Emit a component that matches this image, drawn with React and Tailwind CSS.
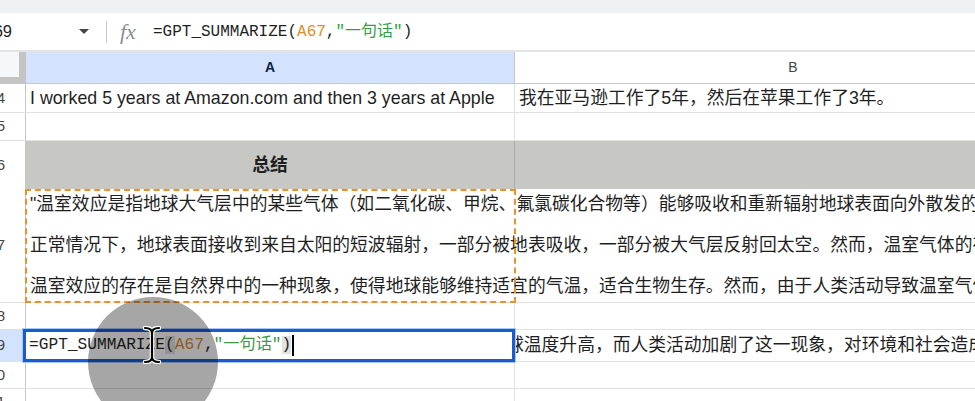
import React from "react";

const sans = "font-['Liberation_Sans','Noto_Sans_CJK_SC',sans-serif]";
const mono = "font-['Liberation_Mono','Noto_Sans_CJK_SC',monospace]";

const line1 =
  '"温室效应是指地球大气层中的某些气体（如二氧化碳、甲烷、氟氯碳化合物等）能够吸收和重新辐射地球表面向外散发的热量';
const line2 =
  "正常情况下，地球表面接收到来自太阳的短波辐射，一部分被地表吸收，一部分被大气层反射回太空。然而，温室气体的存在";
const line3 =
  "温室效应的存在是自然界中的一种现象，使得地球能够维持适宜的气温，适合生物生存。然而，由于人类活动导致温室气体";

const Formula = ({ paren = false }) => (
  <>
    <span>=GPT_SUMMARIZE</span>
    <span className={paren ? "bg-[#e2e2e2]" : ""}>(</span>
    <span className="text-[#de8f2c]">A67</span>
    <span>,</span>
    <span className="text-[#379b45]">"一句话"</span>
    <span className={paren ? "bg-[#e2e2e2]" : ""}>)</span>
  </>
);

const RowNum = ({ n, active }) => (
  <div
    className={`w-[26px] shrink-0 border-r border-[#c4c7c5] overflow-hidden flex items-center justify-end pr-[20px] text-[15px] text-[#444] ${
      active ? "bg-[#d3e3fd]" : "bg-white"
    }`}
  >
    <span className="shrink-0">{n}</span>
  </div>
);

export default function App() {
  return (
    <div className={`w-[975px] h-[401px] overflow-hidden bg-white relative text-[#1f1f1f] ${sans}`}>
      {/* top strip */}
      <div className="h-[13px] bg-[#eef1f4]" />

      {/* formula bar */}
      <div className="h-[39px] flex items-center border-b-2 border-[#e1e3e6]">
        <div className="w-[106px] shrink-0 flex items-center">
          <div className="w-[12px] overflow-hidden flex justify-end">
            <span className="shrink-0 text-[16.5px]">69</span>
          </div>
          <div className="ml-[67px] w-0 h-0 border-l-[5px] border-r-[5px] border-t-[5px] border-l-transparent border-r-transparent border-t-[#444]" />
        </div>
        <div className="w-px h-[22px] bg-[#c7c7c7]" />
        <span className="ml-[13px] w-[20px] font-['Liberation_Serif',serif] italic text-[22px] text-[#8a8d91] leading-none">
          fx
        </span>
        <span className={`ml-[13px] text-[16px] whitespace-nowrap ${mono}`}>
          <Formula />
        </span>
      </div>

      {/* column headers */}
      <div className="h-[32px] flex border-b border-[#c4c7c5]">
        <div className="w-[26px] shrink-0 bg-[#c4c4c4]">
          <div className="w-[19px] h-[25px] bg-[#f6f7f8]" />
        </div>
        <div className="w-[489px] shrink-0 bg-[#d3e3fd] border-r border-[#c4c7c5] flex items-center justify-center text-[14px] font-bold text-[#0b1d45]">
          A
        </div>
        <div className="w-[556px] shrink-0 flex items-center justify-center text-[14px] text-[#444]">
          B
        </div>
      </div>

      {/* row 64 */}
      <div className="h-[29px] flex border-b border-[#e1e1e1] text-[17.8px]">
        <RowNum n="64" />
        <div className="w-[489px] shrink-0 border-r border-[#e1e1e1] flex items-center pl-[4px] whitespace-nowrap">
          I worked 5 years at Amazon.com and then 3 years at Apple
        </div>
        <div className="flex-1 flex items-center pl-[4px] whitespace-nowrap">
          我在亚马逊工作了5年，然后在苹果工作了3年。
        </div>
      </div>

      {/* row 65 */}
      <div className="h-[28px] flex border-b border-[#e1e1e1]">
        <RowNum n="65" />
        <div className="w-[489px] shrink-0 border-r border-[#e1e1e1]" />
        <div className="flex-1" />
      </div>

      {/* row 66 */}
      <div className="h-[48px] flex">
        <RowNum n="66" />
        <div className="w-[489px] shrink-0 bg-[#c7c7c4] border-r border-[#adadab] flex items-center justify-center text-[17.8px] font-bold">
          总结
        </div>
        <div className="flex-1 bg-[#c7c7c4]" />
      </div>

      {/* row 67 */}
      <div className="h-[114px] flex border-b border-[#e1e1e1] text-[17.8px]">
        <RowNum n="67" />
        <div className="w-[489px] shrink-0 relative">
          <div className="pl-[4px] -mt-[5px] leading-[41px] whitespace-nowrap">
            <div>{line1}</div>
            <div>{line2}</div>
            <div>{line3}</div>
          </div>
          <div className="absolute -left-[1px] top-0 -right-[1px] -bottom-[1px] border-2 border-dashed border-[#e8922e]" />
        </div>
        <div className="flex-1" />
      </div>

      {/* row 68 */}
      <div className="h-[27px] flex border-b border-[#e1e1e1]">
        <RowNum n="68" />
        <div className="w-[489px] shrink-0 border-r border-[#e1e1e1]" />
        <div className="flex-1" />
      </div>

      {/* row 69 */}
      <div className="h-[32px] flex border-b border-[#e1e1e1]">
        <RowNum n="69" active />
        <div className="w-[489px] shrink-0 border-r border-[#e1e1e1] relative flex items-center pl-[3px]">
          <span className={`text-[16.2px] whitespace-nowrap ${mono}`}>
            <Formula paren />
          </span>
          <span className="ml-px w-[1.5px] h-[21px] bg-black" />
          <div className="absolute -left-[3px] -top-[1px] -right-[1px] -bottom-[1px] border-[3px] border-[#1b5bcf] shadow-[0_0_0_1px_#a8c7fa]" />
        </div>
        <div className="flex-1 overflow-hidden flex items-center text-[17.8px]">
          <span className="-ml-[9px] whitespace-nowrap">
            球温度升高，而人类活动加剧了这一现象，对环境和社会造成了影响
          </span>
        </div>
      </div>

      {/* row 70 */}
      <div className="h-[27px] flex border-b border-[#e1e1e1]">
        <RowNum n="70" />
        <div className="w-[489px] shrink-0 border-r border-[#e1e1e1]" />
        <div className="flex-1" />
      </div>

      {/* row 71 */}
      <div className="h-[27px] flex border-b border-[#e1e1e1]">
        <RowNum n="71" />
        <div className="w-[489px] shrink-0 border-r border-[#e1e1e1]" />
        <div className="flex-1" />
      </div>

      {/* click indicator */}
      <div className="absolute left-[88px] top-[297px] w-[130px] h-[130px] rounded-full bg-black/35 pointer-events-none" />

      {/* I-beam cursor */}
      <svg
        className="absolute left-[142px] top-[326px] pointer-events-none"
        width="20"
        height="38"
        viewBox="0 0 20 38"
        fill="none"
      >
        <path
          d="M3 2 Q10 2 10 7 Q10 2 17 2 M10 7 V31 M3 36 Q10 36 10 31 Q10 36 17 36"
          stroke="white"
          strokeWidth="4.5"
          strokeLinecap="round"
        />
        <path
          d="M3 2 Q10 2 10 7 Q10 2 17 2 M10 7 V31 M3 36 Q10 36 10 31 Q10 36 17 36"
          stroke="black"
          strokeWidth="2.2"
          strokeLinecap="round"
        />
      </svg>
    </div>
  );
}
